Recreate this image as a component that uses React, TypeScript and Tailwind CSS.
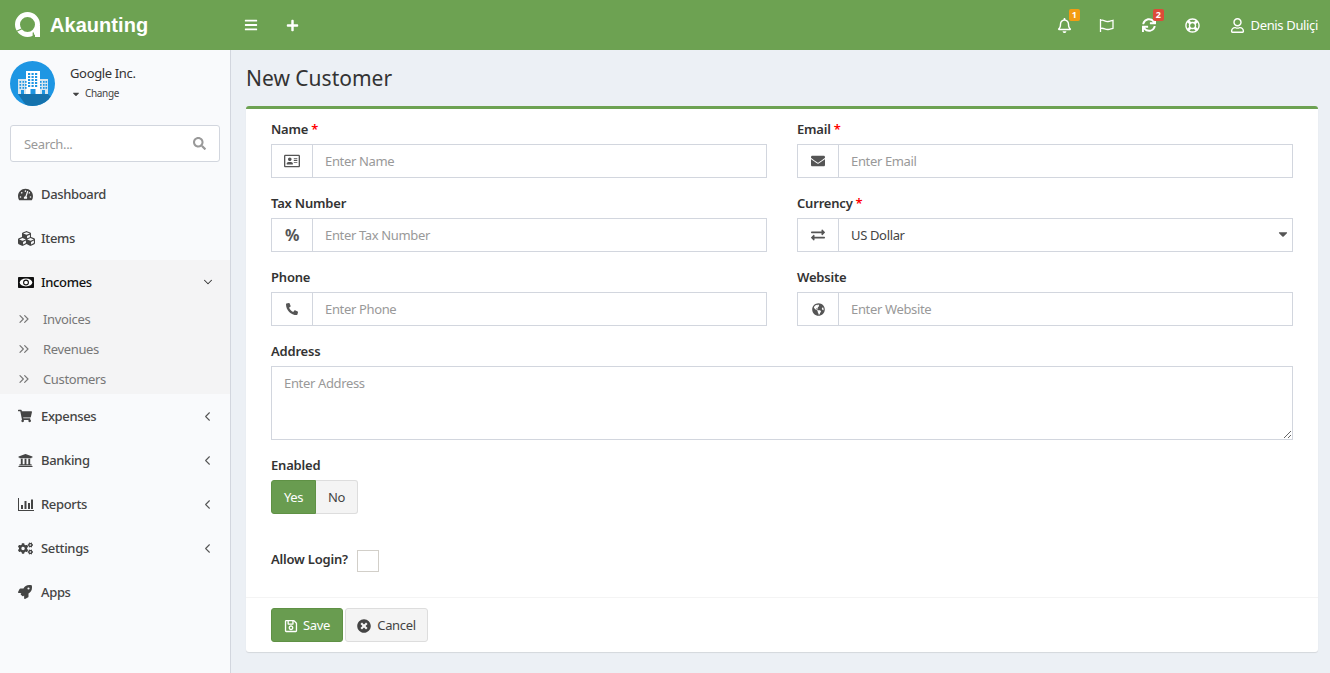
import React from "react";
import {
  FaBars, FaPlus, FaRegBell, FaSync, FaRegLifeRing, FaRegUser, FaSearch, FaCaretDown,
  FaTachometerAlt, FaCubes, FaShoppingCart,
  FaUniversity, FaCogs, FaRocket, FaRegAddressCard, FaEnvelope, FaPhone,
  FaGlobeAmericas, FaExchangeAlt, FaRegSave, FaTimesCircle,
} from "react-icons/fa";
import { ChevronDown, ChevronLeft, ChevronsRight } from "lucide-react";

function Logo() {
  return (
    <svg width="26" height="26" viewBox="0 0 26 26" className="shrink-0">
      <circle cx="12.500" cy="12.500" r="10" fill="none" stroke="#fff" strokeWidth="5" />
      <path d="M20 14h5v11h-5z" fill="#fff" />
      <path d="M18.300 20.500v5M1 19.500l6.500-3" stroke="#6da252" strokeWidth="1.300" fill="none" />
    </svg>
  );
}

function FlagIcon() {
  return (
    <svg width="15" height="13" viewBox="0 0 15 13" fill="none" stroke="currentColor" strokeWidth="1.300" className="ml-[27px]">
      <path d="M1.500 0v13" />
      <path d="M1.500 1.500C4.500 0 6 3 9 2.500c2-.3 3.500-1 5-1.200v8c-1.500.2-3 1-5 1.200-3 .3-4.500-2.200-7.500-1" />
    </svg>
  );
}

function MoneyIcon() {
  return (
    <svg width="16" height="11" viewBox="0 0 16 11">
      <rect width="16" height="11" rx="0.800" fill="currentColor" />
      <ellipse cx="8" cy="5.500" rx="6.300" ry="3.900" fill="#fff" />
      <circle cx="8" cy="5.500" r="2.400" fill="none" stroke="currentColor" strokeWidth="1.100" />
    </svg>
  );
}

function ChartIcon() {
  return (
    <svg width="16" height="13" viewBox="0 0 16 13" fill="currentColor">
      <path d="M0 0h1v12h15v1H0z" />
      <path d="M3 7h2v4H3zM6.500 3h2v8h-2zM10 5h2v6h-2zM13 1.500h2V11h-2z" />
    </svg>
  );
}

function Avatar() {
  return (
    <svg width="45" height="45" viewBox="0 0 45 45" className="shrink-0">
      <clipPath id="c"><circle cx="22.500" cy="22.500" r="22.500" /></clipPath>
      <circle cx="22.500" cy="22.500" r="22.500" fill="#1e96e3" />
      <path d="M8 33h30l9 9-16 8H20z" fill="#1572ad" clipPath="url(#c)" />
      <rect x="8" y="18" width="10" height="15" fill="#d8e6ef" />
      <rect x="28" y="18" width="10" height="15" fill="#d8e6ef" />
      <rect x="16" y="10" width="14" height="23" fill="#fff" />
      {[12, 15, 18, 21, 24].map((y) =>
        [18, 21.500, 25].map((x) => <rect key={`${x}-${y}`} x={x} y={y} width="2.200" height="2" fill="#1e96e3" />)
      )}
      {[20, 23, 26].map((y) =>
        [9.500, 12.500, 15].flatMap((x) => [
          <rect key={`l${x}-${y}`} x={x} y={y} width="1.600" height="1.800" fill="#1e96e3" />,
          <rect key={`r${x}-${y}`} x={x + 20.500} y={y} width="1.600" height="1.800" fill="#1e96e3" />,
        ])
      )}
      <rect x="20.500" y="28" width="5" height="5" fill="#1e96e3" />
      <rect x="11" y="29" width="3" height="4" fill="#1e96e3" />
      <rect x="32" y="29" width="3" height="4" fill="#1e96e3" />
    </svg>
  );
}

function NavItem({ icon, label, arrow, active }: { icon: React.ReactNode; label: string; arrow?: "left" | "down"; active?: boolean }) {
  return (
    <div className={`flex h-[44px] items-center pl-[18px] pr-[13px] text-[13px] ${active ? "text-[#111]" : "text-[#444]"}`}>
      <span className="flex w-[23px] shrink-0 items-center text-[15px]">{icon}</span>
      <span className="flex-1 pt-[2px] font-medium">{label}</span>
      {arrow === "left" && <ChevronLeft size={15} strokeWidth={1.7} className="mr-[2px] text-[#555]" />}
      {arrow === "down" && <ChevronDown size={14} strokeWidth={1.8} className="mr-[2px] text-[#333]" />}
    </div>
  );
}

function SubItem({ label }: { label: string }) {
  return (
    <div className="flex h-[30px] items-center pl-[16px] text-[13px] text-[#777]">
      <ChevronsRight size={16} strokeWidth={1.8} className="mr-[11px] shrink-0 text-[#777]" />
      <span className="pt-[2px]">{label}</span>
    </div>
  );
}

function Label({ children, required }: { children: React.ReactNode; required?: boolean }) {
  return (
    <label className="mb-[5px] block h-[20px] text-[13px] font-semibold leading-[20px] tracking-[-0.2px] text-[#333]">
      {children}
      {required && <span className="ml-[3px] text-[#f00]">*</span>}
    </label>
  );
}

function Field({ label, required, icon, placeholder, select }: { label: string; required?: boolean; icon: React.ReactNode; placeholder?: string; select?: string }) {
  return (
    <div>
      <Label required={required}>{label}</Label>
      <div className="relative flex h-[34px] border border-[#d2d6de]">
        <span className="flex w-[41px] shrink-0 items-center justify-center border-r border-[#d2d6de] text-[14px] text-[#555]">{icon}</span>
        {select ? (
          <>
            <div className="flex flex-1 items-center pl-[12px] pt-[2px] text-[13px] text-[#444]">{select}</div>
            <FaCaretDown className="absolute right-[2px] top-[8px] text-[14px] text-[#555]" />
          </>
        ) : (
          <input placeholder={placeholder} className="min-w-0 flex-1 px-[12px] pt-[2px] text-[13px] text-[#555] outline-none placeholder:text-[#999]" />
        )}
      </div>
    </div>
  );
}

export default function App() {
  return (
    <div className="flex h-[673px] w-[1330px] flex-col overflow-hidden bg-[#ecf0f5] font-['Noto_Sans','Open_Sans',sans-serif] tracking-[-0.35px]">
      <header className="flex h-[50px] shrink-0 items-center bg-[#6da252] text-white">
        <div className="flex w-[230px] shrink-0 items-center pl-[15px]">
          <Logo />
          <span className="ml-[9px] font-['Liberation_Sans',sans-serif] text-[20px] font-bold tracking-[0.05px]">Akaunting</span>
        </div>
        <FaBars className="ml-[14px] text-[14px]" />
        <FaPlus className="ml-[28px] text-[13px]" />
        <div className="ml-auto flex items-center pr-[12px]">
          <span className="relative"><FaRegBell className="text-[15px]" /><span className="absolute -right-[8px] -top-[9px] flex h-[12px] w-[11px] items-center justify-center rounded-[2px] bg-[#f39c12] text-[9px] font-bold">1</span></span>
          <FlagIcon />
          <span className="relative ml-[28px]"><FaSync className="text-[14px]" /><span className="absolute -right-[8px] -top-[9px] flex h-[12px] w-[11px] items-center justify-center rounded-[2px] bg-[#dd4b39] text-[9px] font-bold">2</span></span>
          <FaRegLifeRing className="ml-[29px] text-[15px]" />
          <FaRegUser className="ml-[30px] text-[15px]" />
          <span className="ml-[6px] pt-[1px] text-[13px]">Denis Duliçi</span>
        </div>
      </header>
      <div className="flex min-h-0 flex-1">
        <aside className="w-[231px] shrink-0 border-r border-[#d2d6de] bg-[#f9fafc]">
          <div className="flex h-[65px] items-center pl-[10px] pt-[1px]">
            <Avatar />
            <div className="ml-[15px] -mt-[2px]">
              <div className="text-[13px] leading-[20px] text-[#333]">Google Inc.</div>
              <div className="mt-[3px] flex items-center text-[10px] text-[#444]"><FaCaretDown className="ml-[1px] mr-[4px] text-[10px]" />Change</div>
            </div>
          </div>
          <div className="mx-[10px] mt-[10px] flex h-[37px] items-center rounded-[3px] border border-[#d2d6de] bg-white pl-[13px] pr-[13px]">
            <input placeholder="Search..." className="min-w-0 flex-1 pt-[2px] text-[13px] outline-none placeholder:text-[#999]" />
            <FaSearch className="text-[13px] text-[#999]" />
          </div>
          <nav className="mt-[10px]">
            <NavItem icon={<FaTachometerAlt />} label="Dashboard" />
            <NavItem icon={<FaCubes className="text-[17px]" />} label="Items" />
            <div className="bg-[#f4f4f5]">
              <NavItem icon={<MoneyIcon />} label="Incomes" arrow="down" active />
              <div>
                <SubItem label="Invoices" />
                <SubItem label="Revenues" />
                <SubItem label="Customers" />
              </div>
            </div>
            <NavItem icon={<FaShoppingCart className="text-[14px]" />} label="Expenses" arrow="left" />
            <NavItem icon={<FaUniversity />} label="Banking" arrow="left" />
            <NavItem icon={<ChartIcon />} label="Reports" arrow="left" />
            <NavItem icon={<FaCogs />} label="Settings" arrow="left" />
            <NavItem icon={<FaRocket className="text-[14px]" />} label="Apps" />
          </nav>
        </aside>
        <main className="min-w-0 flex-1 pl-[15px] pr-[12px]">
          <h1 className="flex h-[56px] items-center pt-[2px] text-[21px] tracking-normal text-[#333]">New Customer</h1>
          <section className="h-[546px] rounded-[3px] border-t-[3px] border-[#6da252] bg-white shadow-[0_1px_1px_rgba(0,0,0,0.1)]">
            <div className="h-[488px] px-[25px] pt-[10px]">
              <div className="grid grid-cols-2 gap-x-[30px] gap-y-[15px]">
                <Field label="Name" required icon={<FaRegAddressCard className="text-[16px]" />} placeholder="Enter Name" />
                <Field label="Email" required icon={<FaEnvelope />} placeholder="Enter Email" />
                <Field label="Tax Number" icon={<span className="text-[16px] font-bold leading-none">%</span>} placeholder="Enter Tax Number" />
                <Field label="Currency" required icon={<FaExchangeAlt />} select="US Dollar" />
                <Field label="Phone" icon={<FaPhone className="text-[12px] -scale-x-100" />} placeholder="Enter Phone" />
                <Field label="Website" icon={<FaGlobeAmericas className="text-[13px]" />} placeholder="Enter Website" />
              </div>
              <div className="mt-[15px]">
                <Label>Address</Label>
                <textarea placeholder="Enter Address" className="block h-[74px] w-full border border-[#d2d6de] px-[12px] pb-[6px] pt-[7px] text-[13px] outline-none placeholder:text-[#999]" />
              </div>
              <div className="mt-[15px]">
                <Label>Enabled</Label>
                <div className="flex h-[34px] text-[13px]">
                  <span className="flex w-[45px] items-center justify-center rounded-l-[3px] border border-[#5f9145] bg-[#699c50] pt-[2px] text-white">Yes</span>
                  <span className="flex w-[42px] items-center justify-center rounded-r-[3px] border border-l-0 border-[#ddd] bg-[#f4f4f4] pt-[2px] text-[#444]">No</span>
                </div>
              </div>
              <div className="mt-[34px] flex h-[24px] items-center">
                <span className="text-[13px] font-semibold tracking-[-0.2px] text-[#333]">Allow Login?</span>
                <span className="ml-[9px] mt-[2px] h-[22px] w-[22px] border border-[#d2cfc9] bg-white" />
              </div>
            </div>
            <div className="flex h-[55px] gap-[2px] border-t border-[#f4f4f4] px-[25px] pt-[10px] text-[13px]">
              <button className="flex h-[34px] w-[72px] items-center justify-center gap-[5px] rounded-[3px] border border-[#5f9145] bg-[#699c50] pt-[2px] text-white"><FaRegSave className="text-[14px]" />Save</button>
              <button className="flex h-[34px] w-[83px] items-center justify-center gap-[6px] rounded-[3px] border border-[#ddd] bg-[#f4f4f4] pt-[2px] text-[#444]"><FaTimesCircle className="text-[14px]" />Cancel</button>
            </div>
          </section>
        </main>
      </div>
    </div>
  );
}
